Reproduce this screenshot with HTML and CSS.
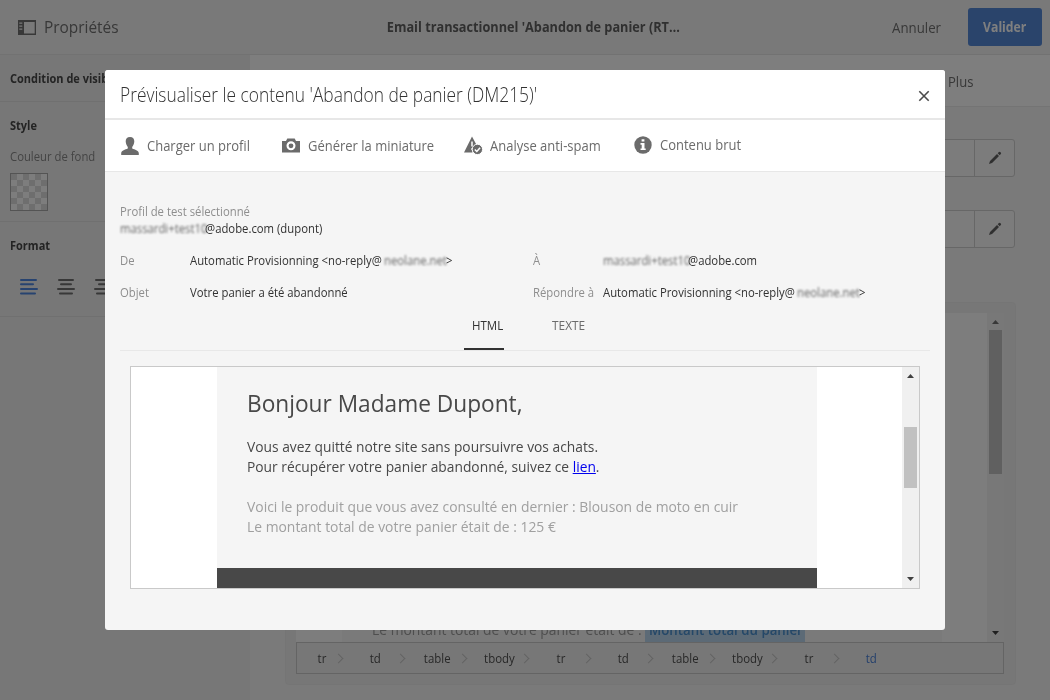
FILE: index.html
```html
<!DOCTYPE html>
<html lang="fr">
<head>
<meta charset="utf-8">
<title>Prévisualiser le contenu</title>
<link rel="stylesheet" href="styles.css">
</head>
<body>
<div class="app">
  <header class="topbar">
    <svg class="panel-icon" width="18" height="15" viewBox="0 0 18 15"><path fill="#707070" fill-rule="evenodd" d="M0 0h18v15H0zM6 2v11.500h10.700V2zM1.300 2.500v1.300h3V2.500zm0 3v1.300h3V5.500zm0 3v1.300h3V8.500z"/></svg>
    <div class="props"><span class="t t-props">Propriétés</span></div>
    <div class="doc"><span class="t t-doc">Email transactionnel 'Abandon de panier (RT…</span></div>
    <div class="cancel"><span class="t t-cancel">Annuler</span></div>
    <div class="ok"><span class="t t-ok">Valider</span></div>
  </header>
  <div class="workspace">
    <aside class="sidebar">
      <section class="visibility"><span class="t t-head">Condition de visibilité</span></section>
      <section class="style-section">
        <div class="side-title"><span class="t t-head">Style</span></div>
        <div class="side-label"><span class="t t-label">Couleur de fond</span></div>
        <div class="swatch"></div>
      </section>
      <section class="format-section">
        <div class="side-title"><span class="t t-head">Format</span></div>
        <div class="aligns">
          <svg width="18" height="16" viewBox="0 0 18 16" stroke="#4f86e0" stroke-width="2" stroke-linecap="round"><path d="M1 1h15M1 5.300h12M1 9.900h16M1 14.500h14"/></svg>
          <svg width="18" height="16" viewBox="0 0 18 16" stroke="#707070" stroke-width="2" stroke-linecap="round"><path d="M2 1h14M4 5.300h10M1 9.900h16M3 14.500h12"/></svg>
          <svg width="18" height="16" viewBox="0 0 18 16" stroke="#707070" stroke-width="2" stroke-linecap="round"><path d="M2 1h15M5 5.300h12M1 9.900h16M3 14.500h14"/></svg>
        </div>
      </section>
    </aside>
    <main class="main">
      <div class="toolbar"><span class="t t-plus">Plus</span></div>
      <div class="editor">
        <div class="field"><div class="pencil"><svg width="14" height="14" viewBox="0 0 14 14"><path fill="#606060" d="M1 13l1-3 7-7 2 2-7 7zM9.700 2.300l1.200-1.200q.8-.6 1.500.1l.4.400q.7.8 0 1.500l-1.100 1.100z"/></svg></div></div>
        <div class="field"><div class="pencil"><svg width="14" height="14" viewBox="0 0 14 14"><path fill="#606060" d="M1 13l1-3 7-7 2 2-7 7zM9.700 2.300l1.200-1.200q.8-.6 1.500.1l.4.400q.7.8 0 1.500l-1.100 1.100z"/></svg></div></div>
        <div class="canvas">
          <div class="frame">
            <div class="mail">
              <div class="mail-text"><span class="t t-under">Le montant total de votre panier était de : </span></div>
              <div class="chip"><span class="t t-chip">Montant total du panier</span></div>
            </div>
            <div class="bar bar-back">
              <svg width="7" height="4" viewBox="0 0 7 4"><path fill="#707070" d="M0 4L3.500 0 7 4z"/></svg>
              <div class="thumb thumb-back"></div>
              <svg class="down" width="7" height="4" viewBox="0 0 7 4"><path fill="#404040" d="M0 0h7L3.500 4z"/></svg>
            </div>
          </div>
          <div class="crumbs">
            <div class="crumb first"><span class="t t-crumb">tr</span></div>
            <div class="crumb"><span class="t t-crumb">td</span></div>
            <div class="crumb"><span class="t t-crumb">table</span></div>
            <div class="crumb"><span class="t t-crumb">tbody</span></div>
            <div class="crumb"><span class="t t-crumb">tr</span></div>
            <div class="crumb"><span class="t t-crumb">td</span></div>
            <div class="crumb"><span class="t t-crumb">table</span></div>
            <div class="crumb"><span class="t t-crumb">tbody</span></div>
            <div class="crumb"><span class="t t-crumb">tr</span></div>
            <div class="crumb last"><span class="t t-crumb">td</span></div>
          </div>
        </div>
      </div>
    </main>
  </div>
</div>
<div class="overlay">
  <div class="modal">
    <div class="modal-head">
      <span class="t t-title">Prévisualiser le contenu 'Abandon de panier (DM215)'</span>
      <svg width="12" height="12" viewBox="0 0 12 12" stroke="#4b4b4b" stroke-width="1.600"><path d="M1.300 1.300l9.400 9.400M10.700 1.300L1.300 10.700"/></svg>
    </div>
    <div class="actions">
      <div class="action a1"><svg width="18" height="18" viewBox="0 0 18 18"><path fill="#6b6b6b" d="M9 0c3 0 4.400 1.800 4.300 4.600C13.200 7.300 12 9 11.200 10v1.600c2.800 1.200 6 2 6.600 4.400V18H.2v-2c.6-2.400 3.800-3.200 6.600-4.400V10C6 9 4.800 7.300 4.700 4.600 4.600 1.800 6 0 9 0z"/></svg><span class="t t-act">Charger un profil</span></div>
      <div class="action a2"><svg width="18" height="15" viewBox="0 0 18 15"><path fill="#6b6b6b" fill-rule="evenodd" d="M0 3h4l1.300-2.500h7.400L14 3h4v11.500H0zM9 3.300a4.500 4.500 0 100 9 4.500 4.500 0 000-9z"/><circle cx="9" cy="7.800" r="2.400" fill="#6b6b6b"/></svg><span class="t t-act">Générer la miniature</span></div>
      <div class="action a3"><svg width="19" height="19" viewBox="0 0 19 19"><path fill="#6b6b6b" d="M8 .500L14.200 12H8.500v4.500H0z"/><path stroke="#fff" stroke-width="1.500" d="M8 5.500v5M8 12.300v1.500"/><circle cx="13.400" cy="13.400" r="5.200" fill="#6b6b6b" stroke="#fff"/><path d="M10.800 13.500l2 2 3.300-3.800" fill="none" stroke="#fff" stroke-width="1.500"/></svg><span class="t t-act">Analyse anti-spam</span></div>
      <div class="action a4"><svg width="18" height="18" viewBox="0 0 18 18"><circle cx="9" cy="9" r="8.700" fill="#6b6b6b"/><path fill="#fff" d="M7.600 3.200h2.800v2.400H7.600zM6.500 7h4v5.400h1.200v1.700H6.500v-1.700h1.200V8.700H6.500z"/></svg><span class="t t-act">Contenu brut</span></div>
    </div>
    <div class="modal-body">
      <div class="line muted"><span class="t t-info t-muted">Profil de test sélectionné</span></div>
      <div class="line"><span class="hidden-id"><span class="t t-info t-blur">massardi+test10</span></span><span class="t t-info">@adobe.com (dupont)</span></div>
      <div class="details">
        <span class="cell"><span class="t t-info t-muted">De</span></span>
        <span class="cell"><span class="addr"><span class="t t-info">Automatic Provisionning &lt;no-reply@</span></span><span class="domain"><span class="t t-info t-blur">neolane.net</span></span><span class="t t-info">&gt;</span></span>
        <span class="cell"><span class="t t-info t-muted">À</span></span>
        <span class="cell"><span class="hidden-id"><span class="t t-info t-blur">massardi+test10</span></span><span class="t t-info">@adobe.com</span></span>
        <span class="cell"><span class="t t-info t-muted">Objet</span></span>
        <span class="cell"><span class="t t-info">Votre panier a été abandonné</span></span>
        <span class="cell"><span class="t t-info t-muted">Répondre à</span></span>
        <span class="cell"><span class="addr"><span class="t t-info">Automatic Provisionning &lt;no-reply@</span></span><span class="domain"><span class="t t-info t-blur">neolane.net</span></span><span class="t t-info">&gt;</span></span>
      </div>
      <div class="tabs">
        <div class="tab active"><span class="t t-tab">HTML</span></div>
        <div class="tab"><span class="t t-tab">TEXTE</span></div>
      </div>
      <div class="preview">
        <div class="letter">
          <div class="hello"><span class="t t-hello">Bonjour Madame Dupont,</span></div>
          <div class="para"><span class="t t-mail">Vous avez quitté notre site sans poursuivre vos achats.</span></div>
          <div class="para"><span class="t t-mail">Pour récupérer votre panier abandonné, suivez ce <a class="link">lien</a>.</span></div>
          <div class="para gap"><span class="t t-mail t-soft">Voici le produit que vous avez consulté en dernier : Blouson de moto en cuir</span></div>
          <div class="para"><span class="t t-mail t-soft">Le montant total de votre panier était de : 125 €</span></div>
          <div class="footer"></div>
        </div>
        <div class="bar">
          <svg width="7" height="4" viewBox="0 0 7 4"><path fill="#404040" d="M0 4L3.500 0 7 4z"/></svg>
          <div class="thumb"></div>
          <svg class="down" width="7" height="4" viewBox="0 0 7 4"><path fill="#404040" d="M0 0h7L3.500 4z"/></svg>
        </div>
      </div>
    </div>
  </div>
</div>
</body>
</html>
```
FILE: styles.css
```css
* { box-sizing: border-box; }
body { margin: 0; width: 1050px; height: 700px; overflow: hidden; position: relative; font-family: "Open Sans", "Noto Sans", sans-serif; color: #323232; }
svg { display: block; flex: none; fill: none; }

/* condensed text runs */
.t { display: inline-block; white-space: nowrap; flex: none; transform-origin: 0 50%; transform: scaleX(.9); }
.t-props { font-size: 17px; color: #707070; transform: scaleX(.906); }
.t-doc { font-size: 14px; font-weight: 700; color: #606060; transform-origin: 50% 50%; transform: scaleX(.908); }
.t-cancel { font-size: 14.500px; color: #707070; transform: scaleX(.915); }
.t-ok { font-size: 14.500px; font-weight: 700; color: #fff; transform-origin: 50% 50%; transform: scaleX(.84); }
.t-head { font-size: 12.500px; font-weight: 700; color: #484848; transform: scaleX(.88); }
.t-label { font-size: 12.500px; color: #888; transform: scaleX(.905); }
.t-plus { font-size: 14.500px; color: #707070; }
.t-under { font-size: 15px; color: #9c9c9c; transform: scaleX(.925); }
.t-chip { font-size: 14.500px; color: #4a90d0; font-weight: 600; transform: scaleX(.915); }
.t-crumb { font-size: 13px; color: #505050; transform-origin: 50% 50%; transform: scaleX(.88); }
.t-title { font-size: 20px; font-weight: 300; color: #323232; transform: scaleX(.868); }
.t-act { font-size: 14.500px; font-weight: 400; color: #6b6b6b; transform: scaleX(.896); }
.t-info { font-size: 12.500px; transform: scaleX(.905); }
.t-muted { color: #8e8e8e; }
.t-blur { filter: blur(1.200px); color: #666; }
.t-tab { font-size: 12.500px; color: #6b6b6b; transform: scaleX(.95); }
.active .t-tab { color: #323232; transform: scaleX(.92); }
.t-hello { font-size: 24.500px; color: #484848; transform: scaleX(.926); }
.t-mail { font-size: 15px; color: #484848; transform: scaleX(.92); }
.t-soft { color: #a0a0a0; transform: scaleX(.926); }
.link { color: #00e; text-decoration: underline; }

.app { width: 1050px; height: 700px; background: #f4f4f4; display: flex; flex-direction: column; }
.topbar { height: 55px; flex: none; display: flex; align-items: center; background: #f3f3f3; border-bottom: 1px solid #e4e4e4; padding-left: 18px; }
.topbar .t { margin-bottom: 2px; }
.props { width: 256px; padding-left: 8px; }
.doc { width: 482px; display: flex; justify-content: center; }
.cancel { width: 194px; padding-left: 118px; }
.ok { width: 74px; height: 38px; flex: none; border-radius: 3px; background: #5488d6; display: flex; align-items: center; justify-content: center; }
.workspace { flex: 1; display: flex; min-height: 0; }
.sidebar { width: 250px; flex: none; background: #efefef; overflow: hidden; }
.visibility { height: 47px; padding-left: 10px; border-bottom: 1px solid #e0e0e0; display: flex; align-items: center; }
.style-section { height: 120px; padding: 13px 0 0 10px; border-bottom: 1px solid #e0e0e0; }
.side-title { height: 20px; display: flex; align-items: center; }
.side-label { height: 20px; margin: 11px 0 7px; display: flex; align-items: center; }
.swatch { width: 38px; height: 38px; border: 1px solid #a8a8a8; background: repeating-conic-gradient(#fbfbfb 0 25%, #dcdcdc 0 50%) 0 0 / 12px 12px; }
.format-section { height: 95px; padding: 13px 0 0 10px; border-bottom: 1px solid #e0e0e0; }
.aligns { display: flex; gap: 19px; padding: 24px 0 0 10px; }
.main { flex: 1; min-width: 0; }
.toolbar { height: 52px; background: #fcfcfc; border-bottom: 1px solid #e8e8e8; padding: 2px 0 0 698px; display: flex; align-items: center; }
.editor { padding: 32px 0 0 35px; }
.field { width: 730px; height: 38px; margin-bottom: 33px; border: 1px solid #cecece; border-radius: 3px; display: flex; justify-content: flex-end; background: #f9f9f9; }
.pencil { width: 40px; border-left: 1px solid #cecece; display: flex; align-items: center; justify-content: center; }
.canvas { width: 731px; height: 383px; margin-top: 54px; padding: 10px; background: #efefef; border: 1px solid #ebebeb; border-radius: 4px; }
.frame { height: 329px; width: 708px; background: #fafafa; display: flex; }
.mail { width: 600px; margin-left: 46px; background: #f4f4f4; display: flex; align-items: flex-end; padding-left: 30px; flex: none; }
.mail-text { width: 273px; height: 25px; line-height: 25px; }
.chip { width: 160px; height: 25px; padding-left: 4px; line-height: 25px; background: #b9d4ec; overflow: hidden; }
.crumbs { width: 708px; height: 32px; border: 1px solid #c9c9c9; display: flex; padding-left: 3px; }
.crumb { width: 62px; display: flex; align-items: center; justify-content: center; position: relative; }
.first { width: 44px; }
.crumb::after { content: ""; position: absolute; right: 2px; top: 12px; width: 6px; height: 6px; border: solid #c6c6c6; border-width: 1px 1px 0 0; transform: rotate(45deg); }
.last::after { display: none; }
.last .t-crumb { color: #4a80d8; }

.bar { width: 17px; height: 100%; margin-left: auto; background: #f0f0f0; display: flex; flex-direction: column; align-items: center; padding: 7px 0; }
.thumb { width: 13px; height: 61px; margin-top: 49px; background: #c1c1c1; }
.thumb-back { height: 144px; margin-top: 6px; }
.down { margin-top: auto; }

.overlay { position: absolute; inset: 0; background: rgba(0,0,0,.5); }
.modal { position: absolute; left: 105px; top: 70px; width: 840px; height: 560px; background: #f5f5f5; border-radius: 3px; overflow: hidden; }
.modal-head { height: 50px; display: flex; align-items: center; justify-content: space-between; background: #fff; border-bottom: 2px solid #e7e7e7; padding: 0 15px; }
.modal-head svg { margin-top: 4px; }
.actions { height: 52px; background: #fff; border-bottom: 1px solid #e7e7e7; display: flex; padding-left: 16px; }
.action { display: flex; align-items: center; gap: 8px; flex: none; }
.a1 { width: 161px; } .a2 { width: 182px; } .a3 { width: 170px; gap: 7px; } .a4 { width: 180px; padding-bottom: 2px; }
.modal-body { padding: 31px 15px 0; }
.line { height: 17px; display: flex; align-items: center; }
.hidden-id { width: 85px; flex: none; display: flex; }
.details { display: grid; grid-template-columns: 70px 343px 70px 300px; grid-auto-rows: 32px; margin-top: 7px; }
.cell { display: flex; align-items: center; }
.addr { width: 194px; flex: none; display: flex; }
.domain { width: 62px; flex: none; display: flex; }
.tabs { height: 43px; border-bottom: 1px solid #e8e8e8; display: flex; padding-left: 344px; gap: 40px; }
.tab { width: 40px; height: 42px; padding: 8px 0 0 8px; line-height: 17px; }
.tab.active { border-bottom: 2px solid #323232; }
.preview { width: 790px; height: 223px; margin: 15px 0 0 10px; border: 1px solid #c9c9c9; background: #fff; display: flex; }
.letter { width: 600px; margin-left: 86px; flex: none; background: #f5f5f5; padding-top: 19px; display: flex; flex-direction: column; }
.hello { height: 34px; line-height: 34px; margin: 0 0 16px 30px; }
.para { height: 20px; line-height: 20px; padding-left: 30px; }
.gap { margin-top: 20px; }
.footer { height: 20px; margin-top: auto; background: #484848; }
```
